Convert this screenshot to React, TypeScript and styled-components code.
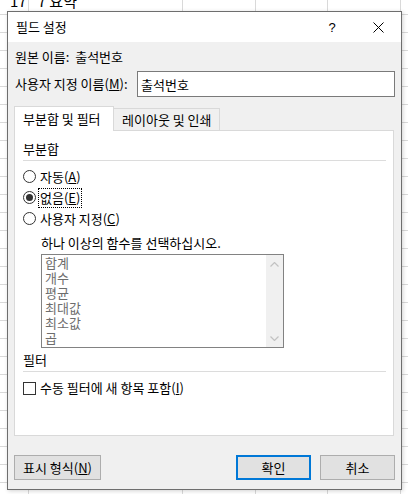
import React from "react";
import styled, { createGlobalStyle } from "styled-components";

const FONT = `"Noto Sans CJK KR", "Malgun Gothic", "Noto Sans", sans-serif`;
const GRID = "#d9d9d9";
const FS = "13px";

const GlobalStyle = createGlobalStyle`
  html, body { margin: 0; padding: 0; }
  body {
    width: 408px;
    height: 494px;
    overflow: hidden;
    background: #fff;
    font-family: ${FONT};
  }
`;

const Sheet = styled.div`
  width: 408px;
  height: 494px;
  overflow: hidden;
  display: flex;
  flex-direction: column;
  background-color: #fff;
  background:
    linear-gradient(${GRID}, ${GRID}) 28px 0 / 1px 100% no-repeat,
    linear-gradient(${GRID}, ${GRID}) 182px 0 / 1px 100% no-repeat,
    linear-gradient(${GRID}, ${GRID}) 255px 0 / 1px 100% no-repeat,
    linear-gradient(${GRID}, ${GRID}) 327px 0 / 1px 100% no-repeat,
    linear-gradient(${GRID}, ${GRID}) 400px 0 / 1px 100% no-repeat,
    linear-gradient(to bottom, ${GRID} 0 1px, transparent 1px) 0 14px / 100% 18px repeat-y,
    #fff;
`;

const TopRow = styled.div`
  height: 11px;
  flex: none;
  overflow: hidden;
  display: flex;
  font-size: 15px;
  line-height: 18px;
  color: #000;
`;

const TopCell = styled.span<{ $left: number }>`
  margin-top: -8px;
  margin-left: ${(p) => p.$left}px;
  white-space: nowrap;
`;

const Dialog = styled.div`
  margin-left: 7px;
  width: 395px;
  height: 479px;
  flex: none;
  box-sizing: border-box;
  border: 1px solid #6e6e6e;
  background: #f0f0f0;
  box-shadow: 1px 1px 4px rgba(0, 0, 0, 0.18);
  display: flex;
  flex-direction: column;
  font-family: ${FONT};
  font-size: ${FS};
  color: #000;
`;

const TitleBar = styled.div`
  height: 30px;
  flex: none;
  background: #fff;
  display: flex;
  align-items: center;
`;

const Title = styled.div`
  flex: 1;
  padding-left: 8px;
  line-height: 16px;
`;

const TitleButton = styled.div`
  width: 46px;
  height: 30px;
  display: flex;
  align-items: center;
  justify-content: center;
  font-family: "Liberation Sans", "DejaVu Sans", sans-serif;
  font-size: 13px;
`;

const Body = styled.div`
  flex: 1;
  padding: 0 6px;
  display: flex;
  flex-direction: column;
`;

const InfoRow = styled.div`
  margin-top: 7px;
  height: 16px;
  line-height: 16px;
  padding-left: 1px;
  white-space: pre;
`;

const NameRow = styled.div`
  margin-top: 6px;
  height: 26px;
  display: flex;
  align-items: center;
`;

const NameLabel = styled.label`
  width: 123px;
  padding-left: 1px;
  box-sizing: border-box;
  line-height: 16px;
  white-space: nowrap;
`;

const TextInput = styled.input`
  width: 258px;
  height: 26px;
  box-sizing: border-box;
  border: 1px solid #7a7a7a;
  background: #fff;
  padding: 0 0 0 3px;
  margin: 0;
  font-family: ${FONT};
  font-size: ${FS};
  color: #000;
  outline: none;
`;

const TabStrip = styled.div`
  margin-top: 9px;
  height: 24px;
  display: flex;
  align-items: flex-end;
`;

const Tab = styled.div<{ $active?: boolean; $width: number }>`
  position: relative;
  z-index: ${(p) => (p.$active ? 2 : 1)};
  width: ${(p) => p.$width}px;
  height: ${(p) => (p.$active ? 25 : 22)}px;
  margin-bottom: ${(p) => (p.$active ? -1 : 0)}px;
  margin-left: ${(p) => (p.$active ? 0 : -1)}px;
  box-sizing: border-box;
  border: 1px solid #d9d9d9;
  border-bottom: none;
  background: ${(p) => (p.$active ? "#fff" : "#f0f0f0")};
  padding-left: 8px;
  padding-top: ${(p) => (p.$active ? 3 : 2)}px;
  line-height: 17px;
  white-space: nowrap;
`;

const TabPanel = styled.div`
  width: 380px;
  height: 306px;
  box-sizing: border-box;
  border: 1px solid #d9d9d9;
  background: #fff;
  padding: 0 7px 0 8px;
  display: flex;
  flex-direction: column;
`;

const GroupLabel = styled.div<{ $top: number }>`
  margin-top: ${(p) => p.$top}px;
  height: 16px;
  line-height: 16px;
`;

const Separator = styled.div`
  margin-top: 3px;
  height: 1px;
  background: #dcdcdc;
`;

const RadioGroup = styled.div`
  margin-top: 5px;
  display: flex;
  flex-direction: column;
`;

const RadioRow = styled.div`
  height: 21px;
  display: flex;
  align-items: center;
  gap: 2px;
`;

const RadioCircle = styled.span<{ $checked?: boolean }>`
  width: 13px;
  height: 13px;
  box-sizing: border-box;
  border: 1px solid #333;
  border-radius: 50%;
  background: #fff;
  display: flex;
  align-items: center;
  justify-content: center;
  &::after {
    content: "";
    display: ${(p) => (p.$checked ? "block" : "none")};
    width: 7px;
    height: 7px;
    border-radius: 50%;
    background: #333;
  }
`;

const OptionLabel = styled.span<{ $focused?: boolean }>`
  height: 20px;
  box-sizing: border-box;
  padding: 0 1px;
  border: 1px dotted ${(p) => (p.$focused ? "#000" : "transparent")};
  line-height: 18px;
  white-space: nowrap;
`;

const Hint = styled.div`
  margin-top: 6px;
  padding-left: 18px;
  height: 16px;
  line-height: 16px;
`;

const ListBox = styled.div`
  margin-top: 3px;
  margin-left: 18px;
  width: 243px;
  height: 94px;
  box-sizing: border-box;
  border: 1px solid #828282;
  background: #fff;
  display: flex;
`;

const ListItems = styled.div`
  flex: 1;
  padding-left: 3px;
  color: #6d6d6d;
`;

const ListItem = styled.div`
  height: 15px;
  line-height: 15px;
`;

const ScrollBar = styled.div`
  width: 17px;
  background: #f0f0f0;
  display: flex;
  flex-direction: column;
  justify-content: space-between;
  align-items: center;
  padding: 7px 0 6px;
`;

const CheckRow = styled.div`
  margin-top: 6px;
  height: 20px;
  display: flex;
  align-items: center;
  gap: 4px;
`;

const CheckBox = styled.span`
  width: 13px;
  height: 13px;
  box-sizing: border-box;
  border: 1px solid #333;
  background: #fff;
`;

const CheckLabel = styled.span`
  line-height: 18px;
  white-space: nowrap;
`;

const ButtonRow = styled.div`
  margin-top: 19px;
  display: flex;
  align-items: center;
`;

const Button = styled.button<{ $width: number; $default?: boolean }>`
  width: ${(p) => p.$width}px;
  height: 25px;
  box-sizing: border-box;
  margin: 0;
  padding: 0;
  border: ${(p) => (p.$default ? "2px solid #0078d7" : "1px solid #adadad")};
  background: #e1e1e1;
  font-family: ${FONT};
  font-size: ${FS};
  line-height: 16px;
  color: #000;
  white-space: nowrap;
`;

const Spacer = styled.div`
  flex: 1;
`;

const ButtonGap = styled.div`
  width: 9px;
`;

const U = styled.span`
  text-decoration: underline;
  text-underline-offset: 1px;
`;

const Chevron = ({ up }: { up?: boolean }) => (
  <svg width="9" height="5" viewBox="0 0 9 5">
    <polyline
      points={up ? "0.5,4.5 4.5,0.5 8.5,4.5" : "0.5,0.5 4.5,4.5 8.5,0.5"}
      fill="none"
      stroke="#c2c2c2"
      strokeWidth="1.2"
    />
  </svg>
);

const functions = ["합계", "개수", "평균", "최대값", "최소값", "곱"];

export default function App() {
  return (
    <>
      <GlobalStyle />
      <Sheet>
        <TopRow>
          <TopCell $left={10}>17</TopCell>
          <TopCell $left={11}>7 요약</TopCell>
        </TopRow>
        <Dialog>
          <TitleBar>
            <Title>필드 설정</Title>
            <TitleButton>?</TitleButton>
            <TitleButton>
              <svg width="11" height="11" viewBox="0 0 11 11">
                <path d="M0.5 0.5 L10.5 10.5 M10.5 0.5 L0.5 10.5" stroke="#000" strokeWidth="1" fill="none" />
              </svg>
            </TitleButton>
          </TitleBar>
          <Body>
            <InfoRow>원본 이름:  출석번호</InfoRow>
            <NameRow>
              <NameLabel>
                사용자 지정 이름(<U>M</U>):
              </NameLabel>
              <TextInput defaultValue="출석번호" />
            </NameRow>
            <TabStrip>
              <Tab $active $width={100}>부분합 및 필터</Tab>
              <Tab $width={107}>레이아웃 및 인쇄</Tab>
            </TabStrip>
            <TabPanel>
              <GroupLabel $top={10}>부분합</GroupLabel>
              <Separator />
              <RadioGroup>
                <RadioRow>
                  <RadioCircle />
                  <OptionLabel>
                    자동(<U>A</U>)
                  </OptionLabel>
                </RadioRow>
                <RadioRow>
                  <RadioCircle $checked />
                  <OptionLabel $focused>
                    없음(<U>E</U>)
                  </OptionLabel>
                </RadioRow>
                <RadioRow>
                  <RadioCircle />
                  <OptionLabel>
                    사용자 지정(<U>C</U>)
                  </OptionLabel>
                </RadioRow>
              </RadioGroup>
              <Hint>하나 이상의 함수를 선택하십시오.</Hint>
              <ListBox>
                <ListItems>
                  {functions.map((f) => (
                    <ListItem key={f}>{f}</ListItem>
                  ))}
                </ListItems>
                <ScrollBar>
                  <Chevron up />
                  <Chevron />
                </ScrollBar>
              </ListBox>
              <GroupLabel $top={4}>필터</GroupLabel>
              <Separator />
              <CheckRow>
                <CheckBox />
                <CheckLabel>
                  수동 필터에 새 항목 포함(<U>I</U>)
                </CheckLabel>
              </CheckRow>
            </TabPanel>
            <ButtonRow>
              <Button $width={87}>
                표시 형식(<U>N</U>)
              </Button>
              <Spacer />
              <Button $width={75} $default>
                확인
              </Button>
              <ButtonGap />
              <Button $width={75}>취소</Button>
            </ButtonRow>
          </Body>
        </Dialog>
      </Sheet>
    </>
  );
}
